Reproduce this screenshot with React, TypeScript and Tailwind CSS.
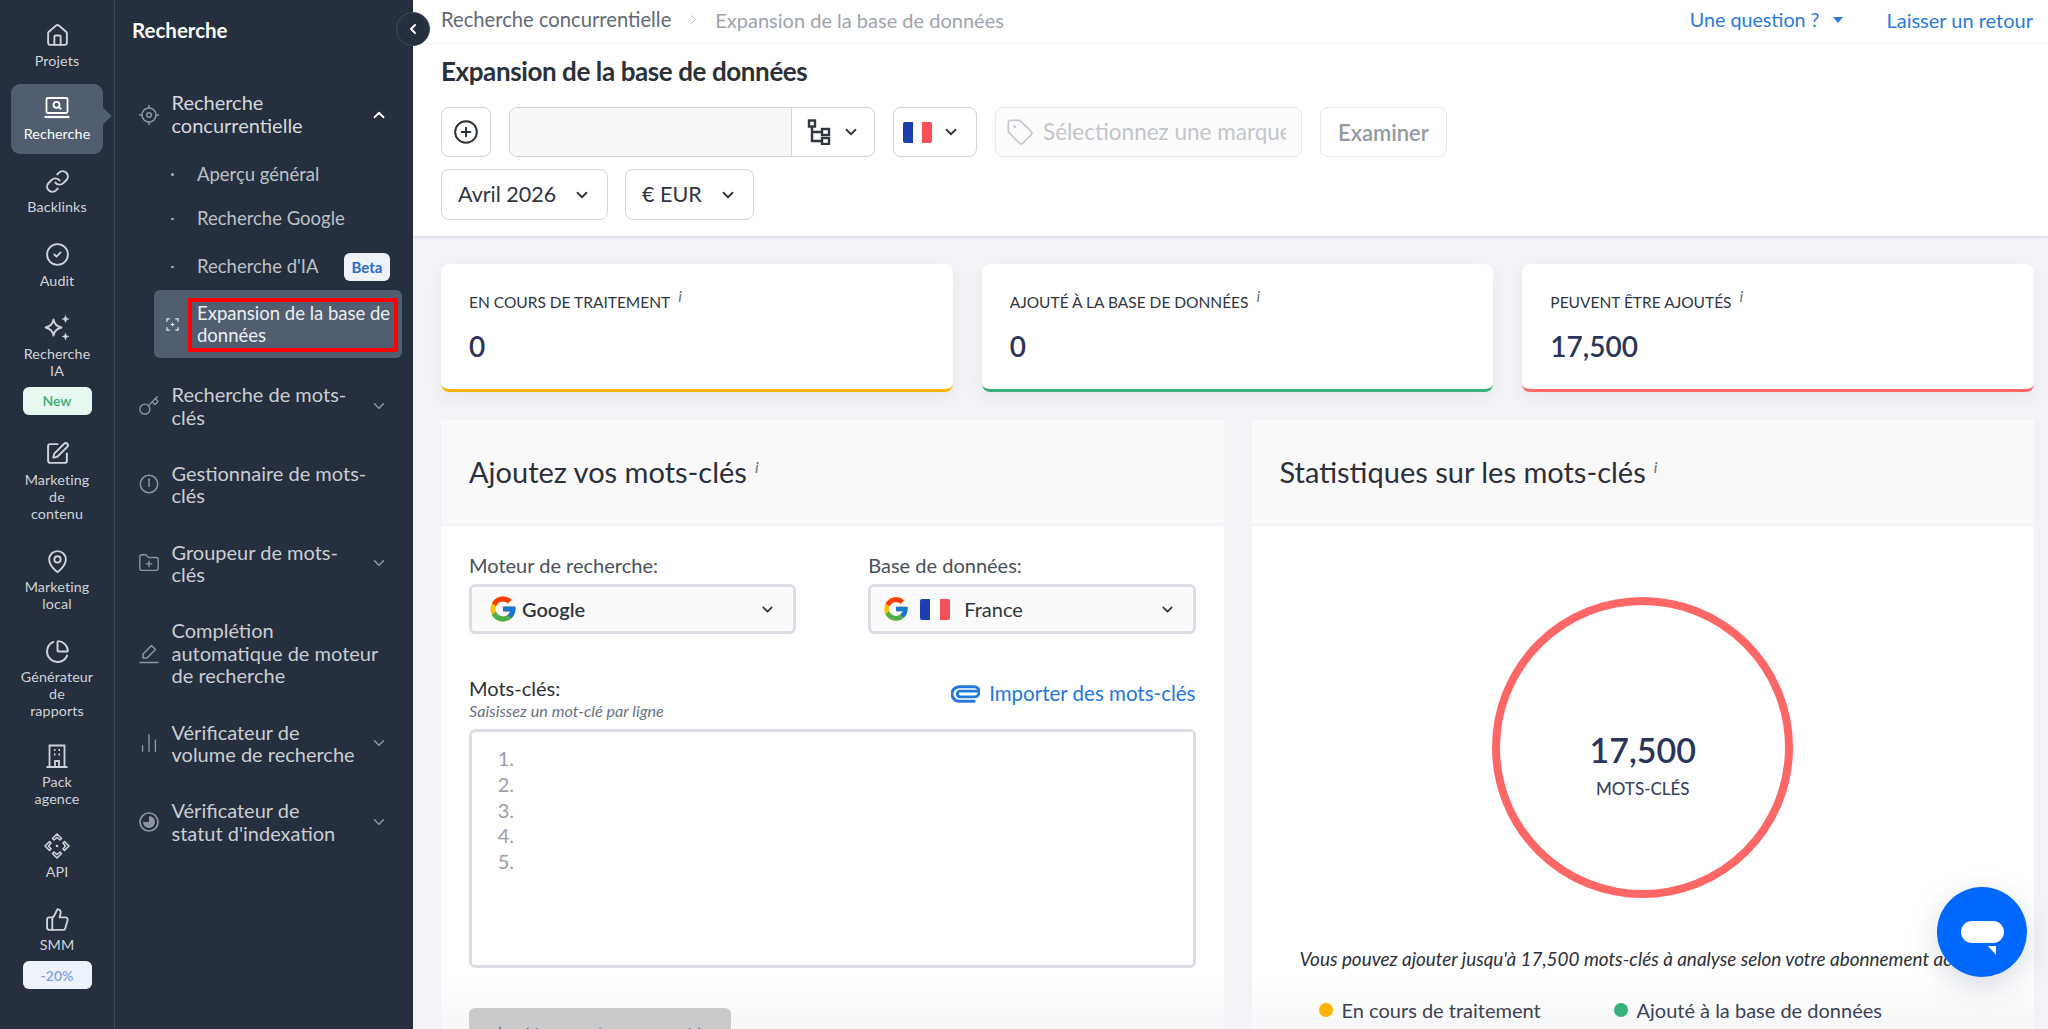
import {
  ChartNoAxesColumn,
  ChartPie,
  ChevronDown,
  ChevronLeft,
  ChevronRight,
  ChevronUp,
  CircleCheck,
  CirclePlus,
  FolderPlus,
  House,
  Key,
  Link,
  MapPin,
  Plus,
  SquarePen,
  Tag,
  ThumbsUp,
} from "lucide-react";
import type { ReactNode } from "react";

function SearchLaptop() {
  return (
    <svg viewBox="0 0 26 24" className="h-6 w-[26px]" fill="none" stroke="currentColor" strokeWidth="1.8">
      <rect x="2.500" y="2" width="21" height="15" rx="1.200" />
      <path d="M0.500 21h25" strokeWidth="2.200" />
      <circle cx="12.500" cy="8.800" r="3" />
      <path d="M14.800 11l2.400 2.300" />
    </svg>
  );
}

function Stars() {
  return (
    <svg viewBox="0 0 26 26" className="h-[26px] w-[26px]" fill="none" stroke="currentColor" strokeWidth="1.800" strokeLinejoin="round">
      <path d="M9.500 4.500c.9 4.900 3 7 8 8-5 1-7.100 3.100-8 8-.9-4.900-3-7-8-8 5-1 7.100-3.100 8-8z" />
      <path d="M21.500 .5c.4 2.300 1.300 3.200 3.500 3.500-2.200.3-3.100 1.200-3.500 3.500-.4-2.300-1.300-3.200-3.500-3.500 2.200-.3 3.100-1.200 3.500-3.500z" fill="currentColor" strokeWidth="0.600" />
      <path d="M21.500 18c.4 2.300 1.300 3.200 3.500 3.500-2.200.3-3.100 1.200-3.500 3.500-.4-2.300-1.300-3.200-3.500-3.500 2.200-.3 3.100-1.200 3.500-3.500z" fill="currentColor" strokeWidth="0.600" />
    </svg>
  );
}

function Agency() {
  return (
    <svg viewBox="0 0 24 24" className="h-6 w-6" fill="none" stroke="currentColor" strokeWidth="1.800">
      <path d="M4.500 23V1.500h15V23M1.500 23h21" />
      <path d="M10 23v-6h4v6" />
      <path d="M9 6h1.500M13.500 6H15M9 10.500h1.500M13.500 10.500H15" strokeWidth="2" />
    </svg>
  );
}

function ApiIcon() {
  return (
    <svg viewBox="0 0 26 26" className="h-[26px] w-[26px]" fill="none" stroke="currentColor" strokeWidth="1.600" strokeLinejoin="round">
      <path d="M13 1l4.500 4.500-1.500 1.500-3-2.500-3 2.500-1.500-1.500z" />
      <path d="M13 25l4.500-4.500-1.500-1.500-3 2.500-3-2.500-1.500 1.500z" />
      <path d="M1 13l4.500-4.500 1.500 1.500-2.500 3 2.500 3-1.500 1.500z" />
      <path d="M25 13l-4.500-4.500-1.500 1.500 2.500 3-2.500 3 1.500 1.500z" />
      <circle cx="13" cy="13" r="1.300" fill="currentColor" stroke="none" />
    </svg>
  );
}

function TargetIcon() {
  return (
    <svg viewBox="0 0 22 22" className="h-[22px] w-[22px]" fill="none" stroke="currentColor" strokeWidth="1.500">
      <circle cx="11" cy="11" r="7" />
      <circle cx="11" cy="11" r="2.300" />
      <path d="M11 1v3M11 18v3M1 11h3M18 11h3" />
    </svg>
  );
}

function GaugeIcon() {
  return (
    <svg viewBox="0 0 22 22" className="h-[22px] w-[22px]" fill="none" stroke="currentColor" strokeWidth="1.500">
      <circle cx="11" cy="11" r="8.700" />
      <path d="M11 7v7" strokeWidth="1.500" />
      <circle cx="11" cy="6.500" r="1" fill="currentColor" stroke="none" />
    </svg>
  );
}

function PenIcon() {
  return (
    <svg viewBox="0 0 22 22" className="h-[22px] w-[22px]" fill="none" stroke="currentColor" strokeWidth="1.500" strokeLinejoin="round">
      <path d="M5 16v-4L13.500 3.500l4 4L9 16z" />
      <path d="M1.500 20.500h19" />
    </svg>
  );
}

function IndexIcon() {
  return (
    <svg viewBox="0 0 22 22" className="h-[22px] w-[22px]" fill="none" stroke="currentColor" strokeWidth="1.700">
      <circle cx="11" cy="11" r="9" />
      <path d="M11 5a6 6 0 1 1-6 6h6z" fill="currentColor" stroke="none" />
    </svg>
  );
}

function ScanPlus() {
  return (
    <svg viewBox="0 0 14 14" className="h-[13px] w-[13px]" fill="none" stroke="#e5e7eb" strokeWidth="1.300">
      <path d="M1 4V1h3M10 1h3v3M13 10v3h-3M4 13H1v-3" />
      <path d="M7 5v4M5 7h4" />
    </svg>
  );
}

function GoogleG({ size }: { size: string }) {
  return (
    <svg viewBox="0 0 48 48" className={size}>
      <path fill="#FFC107" d="M43.600 20.100H42V20H24v8h11.300C33.700 32.700 29.200 36 24 36c-6.600 0-12-5.400-12-12s5.400-12 12-12c3.100 0 5.900 1.200 8 3l5.700-5.700C34.100 6.100 29.300 4 24 4 13 4 4 13 4 24s9 20 20 20 20-9 20-20c0-1.300-.1-2.700-.4-3.900z" />
      <path fill="#FF3D00" d="M6.300 14.700l6.600 4.800C14.700 15.100 19 12 24 12c3.100 0 5.900 1.200 8 3l5.700-5.700C34.100 6.100 29.300 4 24 4 16.300 4 9.700 8.300 6.300 14.700z" />
      <path fill="#4CAF50" d="M24 44c5.200 0 9.900-2 13.400-5.200l-6.200-5.200C29.200 35.100 26.700 36 24 36c-5.200 0-9.600-3.300-11.300-7.900l-6.500 5C9.500 39.600 16.200 44 24 44z" />
      <path fill="#1976D2" d="M43.600 20.100H42V20H24v8h11.300c-.8 2.200-2.200 4.200-4.100 5.600l6.200 5.200C37 39.200 44 34 44 24c0-1.300-.1-2.700-.4-3.900z" />
    </svg>
  );
}

function Flag({ size }: { size: string }) {
  return (
    <div className={`flex overflow-hidden rounded-[2px] ${size}`}>
      <div className="flex-1 bg-[#1c3fb0]" />
      <div className="flex-1 bg-white" />
      <div className="flex-1 bg-[#f5505a]" />
    </div>
  );
}

function Hierarchy() {
  return (
    <svg viewBox="0 0 24 26" className="h-[26px] w-6" fill="none" stroke="#30363f" strokeWidth="2.400">
      <rect x="2" y="1.500" width="6" height="6" />
      <rect x="15" y="10" width="7" height="6" />
      <rect x="15" y="19" width="7" height="6" />
      <path d="M5 8v14h10M5 13h10" />
    </svg>
  );
}

function Clip() {
  return (
    <svg viewBox="0 0 30 20" className="h-5 w-[29px]" fill="none" stroke="#2478d9" strokeWidth="3" strokeLinecap="round">
      <path d="M27 7H9.500a3 3 0 0 0 0 6H24a4.500 4.500 0 0 0 0-10.500H8.500a7 7 0 0 0 0 15H24" />
    </svg>
  );
}

const railItems: { label: string; icon: ReactNode; active?: boolean; badge?: "new" | "off"; tight?: boolean }[] = [
  { label: "Projets", icon: <House size={25} strokeWidth={1.8} /> },
  { label: "Recherche", icon: <SearchLaptop />, active: true },
  { label: "Backlinks", icon: <Link size={25} strokeWidth={1.9} /> },
  { label: "Audit", icon: <CircleCheck size={25} strokeWidth={1.8} /> },
  { label: "Recherche\nIA", icon: <Stars />, badge: "new" },
  { label: "Marketing\nde\ncontenu", icon: <SquarePen size={25} strokeWidth={1.9} /> },
  { label: "Marketing\nlocal", icon: <MapPin size={25} strokeWidth={1.8} /> },
  { label: "Générateur\nde\nrapports", icon: <ChartPie size={25} strokeWidth={1.9} />, tight: true },
  { label: "Pack\nagence", icon: <Agency /> },
  { label: "API", icon: <ApiIcon /> },
  { label: "SMM", icon: <ThumbsUp size={25} strokeWidth={1.8} />, badge: "off" },
];

const navItems: { label: string; icon: ReactNode; chevron: boolean }[] = [
  { label: "Recherche de mots-\nclés", icon: <Key size={22} strokeWidth={1.5} />, chevron: true },
  { label: "Gestionnaire de mots-\nclés", icon: <GaugeIcon />, chevron: false },
  { label: "Groupeur de mots-\nclés", icon: <FolderPlus size={22} strokeWidth={1.5} />, chevron: true },
  { label: "Complétion\nautomatique de moteur\nde recherche", icon: <PenIcon />, chevron: false },
  { label: "Vérificateur de\nvolume de recherche", icon: <ChartNoAxesColumn size={22} strokeWidth={1.5} />, chevron: true },
  { label: "Vérificateur de\nstatut d'indexation", icon: <IndexIcon />, chevron: true },
];

function Rail() {
  return (
    <aside className="flex w-[115px] shrink-0 flex-col gap-[3.200px] border-r border-[#3f4a58] px-[11px] pt-[11px]">
      {railItems.map((item) => (
        <div
          key={item.label}
          className={`relative flex flex-col items-center rounded-[9px] pt-3 ${item.tight ? "pb-[9.500px]" : "pb-[12px]"} ${item.active ? "bg-[#505e70] text-white" : "text-[#cfd3d9]"}`}
        >
          <div className="flex h-6 items-center justify-center">{item.icon}</div>
          <div className="mt-[5px] whitespace-pre-line text-center text-[14.300px] leading-[17px] tracking-[0.1px]">
            {item.label}
          </div>
          {item.badge === "new" && (
            <div className="mt-2 flex h-7 w-[69px] items-center justify-center rounded-md bg-[#e6f8ef] text-[14px] font-semibold text-[#3aad78]">
              New
            </div>
          )}
          {item.badge === "off" && (
            <div className="mt-2 flex h-7 w-[69px] items-center justify-center rounded-md bg-[#eef2fa] text-[14px] font-semibold text-[#7d9fe6]">
              -20%
            </div>
          )}
          {item.active && (
            <div className="absolute top-[26px] right-[-6px] h-[12px] w-[12px] rotate-45 bg-[#505e70]" />
          )}
        </div>
      ))}
    </aside>
  );
}

function SubItem({ label, badge }: { label: string; badge?: boolean }) {
  return (
    <div className={`flex items-center pl-3 pr-3 text-[#bcc1c8] ${badge ? "h-[50px] pt-[3px]" : "h-[44.500px] pt-[2px]"}`}>
      <div className="flex w-[31px] shrink-0 justify-start pl-[5px]">
        <div className="h-[2.500px] w-[2.500px] rounded-full bg-[#aab0b8]" />
      </div>
      <span className="flex-1 text-[18.500px]">{label}</span>
      {badge && (
        <span className="flex h-7 w-[46px] items-center justify-center rounded-md bg-[#eef1f6] text-[15px] font-bold text-[#2a6bc9]">
          Beta
        </span>
      )}
    </div>
  );
}

function Panel() {
  return (
    <aside className="w-[298px] shrink-0">
      <div className="flex h-[60px] items-center pl-[17px] text-[20.500px] font-bold text-white">Recherche</div>
      <div className="mt-[20.750px] pl-[23px] pr-[25px]">
        <div className="flex h-[67.500px] items-center text-[#d5d8dd]">
          <div className="flex w-[22px] justify-center text-[#8d95a1]">
            <TargetIcon />
          </div>
          <div className="-mt-[2px] ml-[11.500px] flex-1 whitespace-pre-line text-[20px] leading-[22.500px]">
            {"Recherche\nconcurrentielle"}
          </div>
          <ChevronUp size={18} strokeWidth={2.4} className="text-white" />
        </div>
      </div>
      <div className="mt-[3px] pl-[39px] pr-[11px]">
        <SubItem label="Aperçu général" />
        <SubItem label="Recherche Google" />
        <SubItem label="Recherche d'IA" badge />
        <div className="relative flex h-[67.750px] items-center rounded-md bg-[#505e70] pl-3 text-[#eceef1]">
          <div className="flex w-[31px] shrink-0">
            <ScanPlus />
          </div>
          <div className="whitespace-pre-line text-[18.500px] leading-[22.500px]">{"Expansion de la base de\ndonnées"}</div>
          <div className="absolute top-2 left-[34px] h-[54px] w-[210px] border-4 border-[#ff0000]" />
        </div>
      </div>
      <div className="mt-[13.750px] flex flex-col gap-[11.300px] pl-[23px] pr-[25px]">
        {navItems.map((item) => (
          <div key={item.label} className="flex items-center py-[11.250px] text-[#c9cdd3]">
            <div className="flex w-[22px] shrink-0 justify-center text-[#8d95a1]">{item.icon}</div>
            <div className="ml-[11.500px] flex-1 whitespace-pre-line text-[20px] leading-[22.500px]">{item.label}</div>
            {item.chevron && <ChevronDown size={18} strokeWidth={2} className="text-[#8d95a1]" />}
          </div>
        ))}
      </div>
    </aside>
  );
}

function Sup() {
  return <i className="ml-[8px] align-super text-[16px] leading-[0] text-[#6b7280]">i</i>;
}

function Control({ children, className }: { children: ReactNode; className: string }) {
  return (
    <div className={`flex h-[50px] items-center rounded-lg border border-[#d3d5dc] ${className}`}>{children}</div>
  );
}

function TopArea() {
  return (
    <header className="h-[236px] shrink-0 bg-white shadow-[0_1px_3px_rgba(30,40,70,0.12)]">
      <div className="flex h-11 items-center border-b border-[#f3f4f6] pb-[4px] pl-[28px] pr-[15px] text-[20.200px]">
        <span className="text-[#636a75]">Recherche concurrentielle</span>
        <ChevronRight size={15} strokeWidth={1.5} className="mx-[14.500px] text-[#a8adb5]" />
        <span className="text-[20px] text-[#9ea3ac]">Expansion de la base de données</span>
        <span className="ml-auto text-[19.700px] text-[#2a7ad9]">Une question ?</span>
        <span className="ml-[14px] h-0 w-0 border-x-[5.500px] border-t-[6px] border-x-transparent border-t-[#2a7ad9]" />
        <span className="ml-[43px] text-[20px] text-[#2a7ad9]">Laisser un retour</span>
      </div>
      <div className="pl-[28px]">
        <h1 className="mt-[10px] h-[34px] text-[26px] leading-[34px] font-bold tracking-[-0.4px] text-[#2c3038]">
          Expansion de la base de données
        </h1>
        <div className="mt-[19px] flex gap-[18px]">
          <Control className="w-[50px] justify-center">
            <CirclePlus size={26} strokeWidth={1.8} className="text-[#2c3038]" />
          </Control>
          <Control className="w-[366px]">
            <div className="h-full flex-1 rounded-l-lg bg-[#f8f8f9]" />
            <div className="flex h-full w-[83px] items-center justify-center gap-[11px] border-l border-[#d3d5dc]">
              <Hierarchy />
              <ChevronDown size={18} strokeWidth={2.4} className="text-[#30363f]" />
            </div>
          </Control>
          <Control className="w-[84px] gap-[10px] pl-[9px]">
            <Flag size="h-[21px] w-[29px]" />
            <ChevronDown size={18} strokeWidth={2.4} className="text-[#30363f]" />
          </Control>
          <Control className="w-[307px] gap-[9px] overflow-hidden border-[#e6e7eb] bg-[#fcfcfc] pl-[10px] text-[#c2c5cb]">
            <Tag size={28} strokeWidth={1.5} className="shrink-0 text-[#c7cad0]" />
            <span className="w-[243px] overflow-hidden text-[22.500px] whitespace-nowrap">Sélectionnez une marque</span>
          </Control>
          <Control className="w-[127px] justify-center border-[#e6e7eb] text-[22px] font-semibold text-[#9599a1]">
            Examiner
          </Control>
        </div>
        <div className="mt-3 flex gap-[17px]">
          <Control className="h-[51px] w-[167px] justify-between border-[#d3d5dc] px-4 text-[21.500px] text-[#30363f]">
            Avril 2026
            <ChevronDown size={18} strokeWidth={2.4} />
          </Control>
          <Control className="h-[51px] w-[129px] justify-between border-[#d3d5dc] px-4 text-[21.500px] text-[#30363f]">
            € EUR
            <ChevronDown size={18} strokeWidth={2.4} />
          </Control>
        </div>
      </div>
    </header>
  );
}

function Stat({ label, value, border }: { label: string; value: string; border: string }) {
  return (
    <div className={`h-[128px] rounded-lg border-b-[3px] bg-white pt-[27px] pl-[28px] shadow-[0_6px_14px_rgba(40,50,80,0.05)] ${border}`}>
      <div className="h-[22px] text-[15.500px] leading-[22px] text-[#30363f]">
        {label}
        <Sup />
      </div>
      <div className="mt-[13px] text-[28px] leading-[40px] font-semibold text-[#2b3558]">{value}</div>
    </div>
  );
}

function PanelHead({ title }: { title: string }) {
  return (
    <div className="flex h-[106px] items-center border-b-2 border-[#f3f4f6] bg-[#f9f9fa] pl-[28px] text-[29px] text-[#2c3038]">
      <span>
        {title}
        <Sup />
      </span>
    </div>
  );
}

function SelectBox({ children }: { children: ReactNode }) {
  return (
    <div className="mt-[6px] flex h-[50px] items-center rounded-md border-[3px] border-[#dcdde7] bg-[#fafafb] text-[20px] text-[#30363f]">
      {children}
    </div>
  );
}

function AddPanel() {
  return (
    <section className="rounded-t-lg bg-[linear-gradient(#fff_560px,#f6f7f8_609px)]">
      <PanelHead title="Ajoutez vos mots-clés" />
      <div className="px-[28px] pt-[27px]">
        <div className="grid grid-cols-2 gap-[72px]">
          <div>
            <div className="h-[25px] text-[20px] leading-[25px] text-[#4a4f58]">Moteur de recherche:</div>
            <SelectBox>
              <div className="ml-[16px]">
                <GoogleG size="h-[30px] w-[30px]" />
              </div>
              <span className="ml-[4px] font-semibold">Google</span>
              <ChevronDown size={17} strokeWidth={2.4} className="mr-[17px] ml-auto" />
            </SelectBox>
          </div>
          <div>
            <div className="h-[25px] text-[20px] leading-[25px] text-[#4a4f58]">Base de données:</div>
            <SelectBox>
              <div className="ml-[11px]">
                <GoogleG size="h-[28px] w-[28px]" />
              </div>
              <div className="ml-[10px]">
                <Flag size="h-[21px] w-[30px]" />
              </div>
              <span className="ml-[14px]">France</span>
              <ChevronDown size={17} strokeWidth={2.4} className="mr-[17px] ml-auto" />
            </SelectBox>
          </div>
        </div>
        <div className="mt-[42px] flex items-start justify-between">
          <div>
            <div className="h-[25px] text-[20px] leading-[25px] text-[#2c3038]">Mots-clés:</div>
            <div className="mt-[1px] text-[16.200px] leading-[18px] text-[#6b7280] italic">Saisissez un mot-clé par ligne</div>
          </div>
          <div className="mt-[5px] flex items-center gap-[9px] text-[20.500px] leading-[25px] text-[#2478d9]">
            <Clip />
            Importer des mots-clés
          </div>
        </div>
        <div className="mt-[9px] h-[239px] rounded-md border-[3px] border-[#dcdde7] pt-[14px] pl-[24px] text-[20px] leading-[25.800px] text-[#9a9ea6]">
          {[1, 2, 3, 4, 5].map((n) => (
            <div key={n} className="w-[18px] text-right">
              {n}.
            </div>
          ))}
        </div>
        <div className="mt-[40px] flex h-[52px] w-[262px] items-center justify-center gap-[10px] rounded-md bg-[#c8cacc] text-[20px] text-[#73777c]">
          <Plus size={22} />
          Ajouter des mots-clés
        </div>
      </div>
    </section>
  );
}

function StatsPanel() {
  return (
    <section className="rounded-t-lg bg-[linear-gradient(#fff_560px,#f6f7f8_609px)]">
      <PanelHead title="Statistiques sur les mots-clés" />
      <div className="flex flex-col items-center pt-[71px]">
        <div className="flex h-[301px] w-[301px] flex-col items-center justify-center rounded-full border-[8.500px] border-[#ff6666] pt-[32px]">
          <div className="text-[34px] leading-[44px] font-semibold text-[#2b3558]">17,500</div>
          <div className="mt-[6px] text-[17px] leading-[22px] font-medium text-[#3c4560]">MOTS-CLÉS</div>
        </div>
        <div className="mt-[48px] w-full pl-[48px] text-[18.900px] leading-[26px] whitespace-nowrap text-[#2c3038] italic">
          Vous pouvez ajouter jusqu'à 17,500 mots-clés à analyse selon votre abonnement actuel.
        </div>
        <div className="mt-[24.500px] grid w-full grid-cols-[295px_1fr] pl-[67px] text-[20px] leading-[26px] text-[#3c4252]">
          <div className="flex items-center gap-[9px]">
            <span className="h-[14px] w-[14px] rounded-full bg-[#ffb400]" />
            En cours de traitement
          </div>
          <div className="flex items-center gap-[9px]">
            <span className="h-[14px] w-[14px] rounded-full bg-[#38b27a]" />
            Ajouté à la base de données
          </div>
          <div className="flex items-center gap-[9px]">
            <span className="h-[14px] w-[14px] rounded-full bg-[#ff6666]" />
            Peuvent être ajoutés
          </div>
        </div>
      </div>
    </section>
  );
}

export default function App() {
  return (
    <div className="relative flex h-[1029px] w-[2048px] overflow-hidden bg-[#f2f3f7] font-[Lato,sans-serif]">
      <div className="flex shrink-0 bg-[#262f3d]">
        <Rail />
        <Panel />
      </div>
      <main className="flex min-w-0 flex-1 flex-col">
        <TopArea />
        <div className="pt-[28px] pr-[14px] pl-[28px]">
          <div className="grid grid-cols-3 gap-[29px]">
            <Stat label="EN COURS DE TRAITEMENT" value="0" border="border-[#ffb400]" />
            <Stat label="AJOUTÉ À LA BASE DE DONNÉES" value="0" border="border-[#38b27a]" />
            <Stat label="PEUVENT ÊTRE AJOUTÉS" value="17,500" border="border-[#ff6666]" />
          </div>
          <div className="mt-[28px] grid grid-cols-2 gap-[28px]">
            <AddPanel />
            <StatsPanel />
          </div>
        </div>
      </main>

      <button className="absolute top-[12px] left-[396px] flex h-[34px] w-[34px] items-center justify-center rounded-full border border-[#3f4a58] bg-[#262f3d] text-white">
        <ChevronLeft size={16} strokeWidth={3} />
      </button>

      <div className="absolute top-[887px] left-[1937px] flex h-[90px] w-[90px] items-center justify-center rounded-full bg-[#0068ff] shadow-[0_10px_30px_rgba(30,50,90,0.18)]">
        <div className="relative h-[22px] w-[43px] rounded-[11px] bg-white">
          <div className="absolute top-[25px] left-[27px] h-0 w-0 border-t-[9px] border-l-[8px] border-t-white border-l-transparent" />
        </div>
      </div>
    </div>
  );
}
